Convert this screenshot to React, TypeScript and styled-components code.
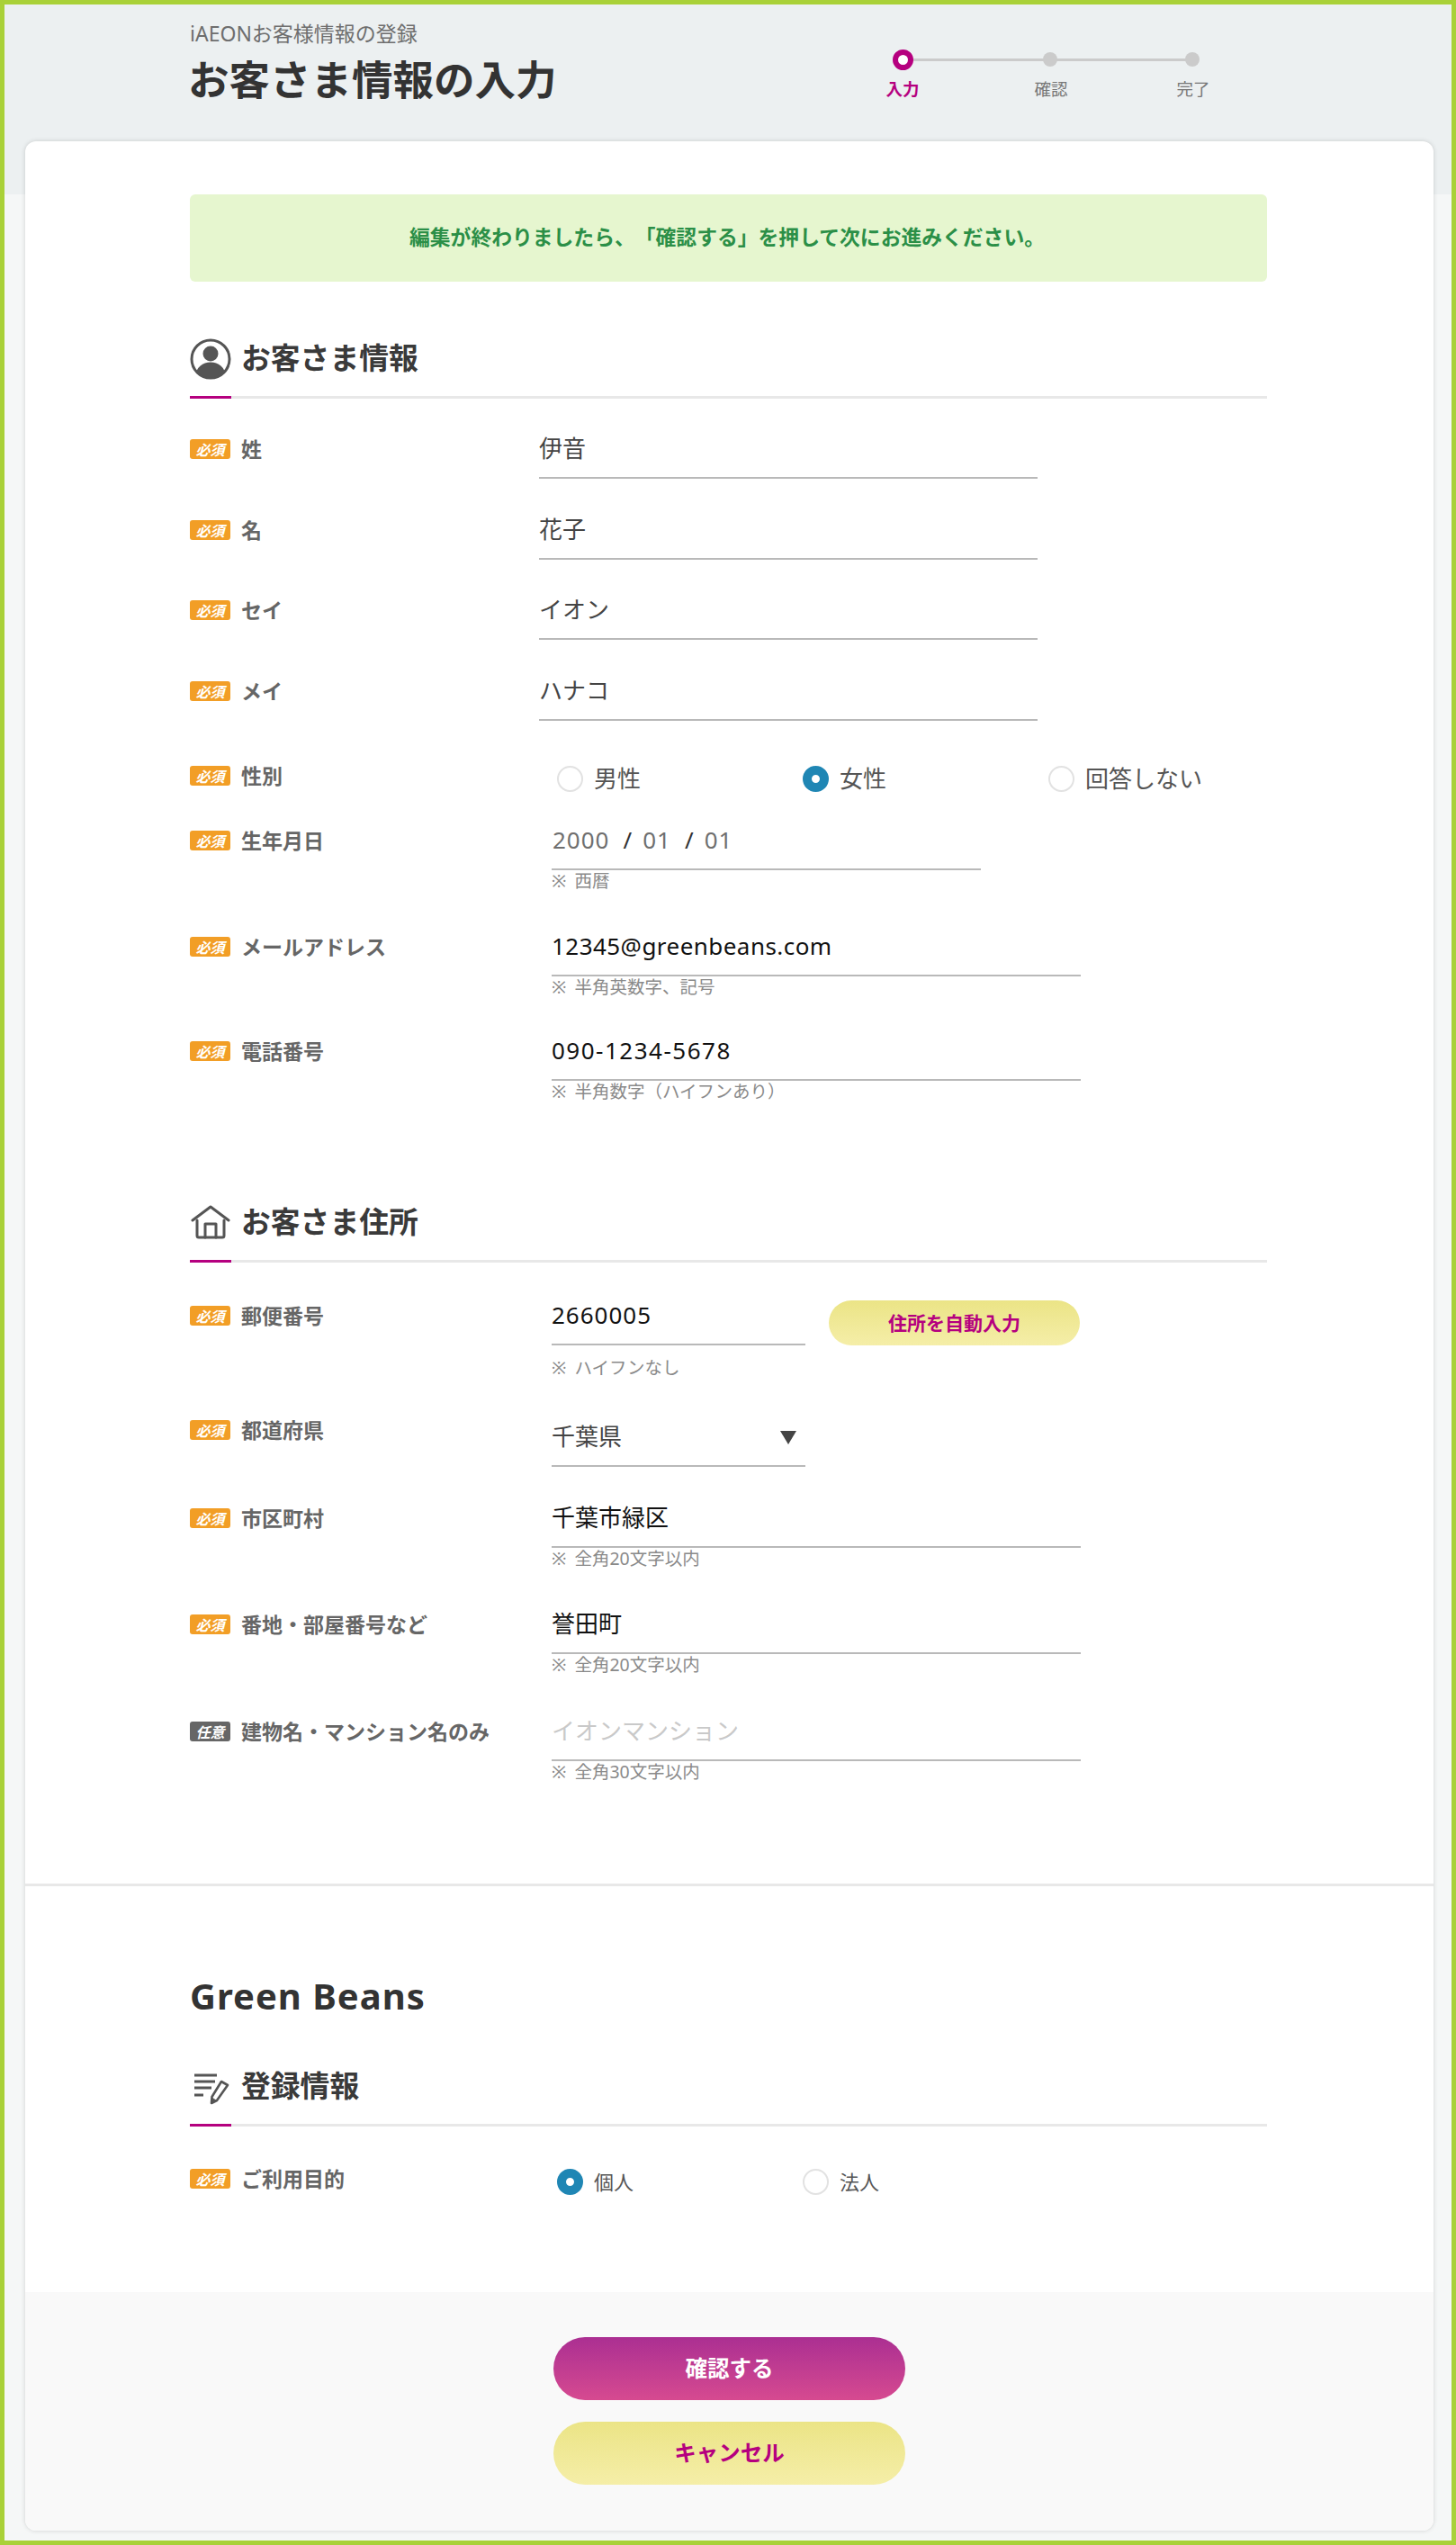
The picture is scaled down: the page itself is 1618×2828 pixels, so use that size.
import React from "react";
import styled, { createGlobalStyle } from "styled-components";

const Global = createGlobalStyle`
  html, body { margin: 0; padding: 0; }
  body {
    font-family: "Noto Sans", "Noto Sans CJK JP", sans-serif;
    color: #333;
    text-spacing-trim: space-all;
  }
  * { box-sizing: border-box; }
`;

const Page = styled.div`
  min-height: 2828px;
  border: 5px solid #a9d138;
  background: linear-gradient(to bottom, #ecf0f1 0, #ecf0f1 211px, #f5f7f7 211px);
  padding-bottom: 11px;
`;
const Header = styled.header`
  display: flex;
  height: 152px;
  padding-left: 205px;
`;
const TitleBlock = styled.div`
  flex: 0 0 763px;
  padding-top: 18px;
`;
const SubTitle = styled.div`
  font-size: 23px;
  line-height: 28px;
  color: #6e6e6e;
  padding-left: 1px;
`;
const Title = styled.h1`
  margin: 7px 0 0 -1px;
  font-size: 45.5px;
  line-height: 60px;
  font-weight: 700;
  color: #333;
`;
const Stepper = styled.div`
  display: flex;
  align-items: flex-start;
  margin-top: 49px;
`;
const Step = styled.div`
  width: 60px;
  display: flex;
  flex-direction: column;
  align-items: center;
  position: relative;
  z-index: 1;
`;
const DotSlot = styled.div`
  height: 24px;
  display: flex;
  align-items: center;
`;
const Dot = styled.span<{ $active?: boolean }>`
  display: block;
  width: ${(p) => (p.$active ? 23 : 16)}px;
  height: ${(p) => (p.$active ? 23 : 16)}px;
  border-radius: 50%;
  background: ${(p) => (p.$active ? "#fff" : "#cbcbcb")};
  border: ${(p) => (p.$active ? "6px solid #b5007f" : "none")};
`;
const StepLabel = styled.div<{ $active?: boolean }>`
  margin-top: 10px;
  font-size: 18.5px;
  line-height: 22px;
  font-weight: ${(p) => (p.$active ? 700 : 400)};
  color: ${(p) => (p.$active ? "#b5007f" : "#777")};
  padding-left: ${(p) => (p.$active ? 0 : 2)}px;
`;
const Connector = styled.div<{ $w: number }>`
  width: ${(p) => p.$w}px;
  height: 3px;
  margin: 11px -30px 0;
  background: #cbcbcb;
`;
const Card = styled.main`
  margin: 0 20px 0 23px;
  background: #fff;
  border-radius: 12px;
  overflow: hidden;
  box-shadow: 0 0 5px rgba(0, 0, 0, 0.16);
`;
const Inner = styled.section<{ $h: number }>`
  display: flow-root;
  height: ${(p) => p.$h}px;
  padding: 0 185px 0 183px;
`;
const Banner = styled.div`
  margin-top: 59px;
  height: 97px;
  display: flex;
  align-items: center;
  justify-content: center;
  background: #e6f6cf;
  border-radius: 6px;
  padding-bottom: 4px;
  padding-right: 3px;
  font-size: 22.8px;
  font-weight: 700;
  color: #2b8f47;
`;
const SectionHead = styled.div<{ $top: number }>`
  position: relative;
  margin-top: ${(p) => p.$top}px;
  display: flex;
  align-items: center;
  height: 66px;
  padding-bottom: 21px;
  border-bottom: 3px solid #e8e8e8;
  &::after {
    content: "";
    position: absolute;
    left: 0;
    bottom: -3px;
    width: 46px;
    height: 3px;
    background: #b5007f;
  }
`;
const HeadIcon = styled.span`
  width: 46px;
  height: 46px;
  display: flex;
  align-items: center;
  justify-content: center;
  margin: 2px 11px 0 0;
`;
const HeadText = styled.h2`
  margin: -1px 0 0;
  font-size: 32.8px;
  line-height: 46px;
  font-weight: 700;
  color: #3a3a3a;
`;
const Row = styled.div<{ $top: number }>`
  display: grid;
  grid-template-columns: 388px 1fr;
  margin-top: ${(p) => p.$top}px;
`;
const LabelCell = styled.div`
  display: flex;
  align-items: center;
  height: 50px;
`;
const Badge = styled.span<{ $optional?: boolean }>`
  flex: none;
  width: 45px;
  height: 22px;
  display: flex;
  align-items: center;
  justify-content: center;
  border-radius: 3px;
  background: ${(p) => (p.$optional ? "#666" : "#f29e26")};
  color: #fff;
  font-size: 16px;
  font-weight: 700;
  font-style: italic;
`;
const LabelText = styled.span`
  margin-left: 12px;
  margin-top: -3px;
  font-size: 23px;
  font-weight: 700;
  color: #666;
`;
const Field = styled.div<{ $w: number; $indent?: number }>`
  width: ${(p) => p.$w}px;
  margin-left: ${(p) => p.$indent ?? 0}px;
`;
const Value = styled.div<{ $tone?: "ink" | "soft" | "hint"; $h?: number; $spacing?: number }>`
  height: ${(p) => p.$h ?? 58}px;
  padding-bottom: 14px;
  display: flex;
  align-items: flex-end;
  border-bottom: 2px solid #b9b9b9;
  font-size: 26px;
  line-height: 36px;
  letter-spacing: ${(p) => p.$spacing ?? 0}px;
  color: ${(p) => (p.$tone === "hint" ? "#c9c9c9" : p.$tone === "soft" ? "#444" : "#111")};
`;
const DatePart = styled.span`
  color: #6f6f6f;
  padding-left: 1px;
  letter-spacing: 1px;
`;
const Slash = styled.span`
  color: #333;
  margin: 0 11px 0 15px;
`;
const Note = styled.div<{ $top?: number }>`
  margin-top: ${(p) => p.$top ?? 1}px;
  font-size: 19.5px;
  line-height: 22px;
  word-spacing: 4px;
  color: #8a8a8a;
`;
const Radios = styled.div<{ $w: number }>`
  display: flex;
  padding: 14px 0 0 20px;
  > * {
    width: ${(p) => p.$w}px;
  }
`;
const RadioItem = styled.label`
  display: flex;
  align-items: center;
  height: 29px;
`;
const RadioMark = styled.span<{ $on?: boolean }>`
  width: 29px;
  height: 29px;
  flex: none;
  border-radius: 50%;
  background: #fff;
  border: ${(p) => (p.$on ? "10px solid #1f86b4" : "2px solid #e2e2e2")};
`;
const RadioText = styled.span<{ $size: number }>`
  margin-left: 12px;
  font-size: ${(p) => p.$size}px;
  color: #555;
  margin-top: -4px;
`;
const ZipRow = styled.div`
  display: flex;
  align-items: flex-end;
  gap: 26px;
`;
const AutoButton = styled.button`
  width: 279px;
  height: 50px;
  padding: 0 0 2px;
  border: none;
  border-radius: 25px;
  background: linear-gradient(to bottom, #ebe486, #f5eea8);
  color: #b5007f;
  font-family: inherit;
  font-size: 21px;
  font-weight: 700;
`;
const SelectArrow = styled.span`
  margin-left: auto;
  margin-right: 10px;
  margin-bottom: 9px;
  width: 0;
  height: 0;
  border-left: 9px solid transparent;
  border-right: 9px solid transparent;
  border-top: 15px solid #444;
`;
const Divider = styled.hr`
  margin: 0;
  border: none;
  height: 3px;
  background: #e8e8e8;
`;
const Brand = styled.h2`
  margin: 0;
  padding-top: 97px;
  font-size: 40px;
  line-height: 50px;
  letter-spacing: 1px;
  font-weight: 700;
  color: #333;
`;
const Footer = styled.footer`
  height: 265px;
  padding-top: 50px;
  display: flex;
  flex-direction: column;
  align-items: center;
  gap: 24px;
  background: #f9f9f9;
`;
const PillButton = styled.button<{ $primary?: boolean }>`
  width: 391px;
  height: 70px;
  padding: 0 0 4px;
  border: none;
  border-radius: 35px;
  background: ${(p) =>
    p.$primary
      ? "linear-gradient(to bottom, #ab2f92, #d64a90)"
      : "linear-gradient(to bottom, #ebe486, #f5eea8)"};
  color: ${(p) => (p.$primary ? "#fff" : "#b5007f")};
  font-family: inherit;
  font-size: 24.5px;
  font-weight: 700;
`;

const UserIcon = () => (
  <svg width="46" height="46" viewBox="0 0 46 46">
    <defs>
      <clipPath id="userClip">
        <circle cx="23" cy="23" r="20.5" />
      </clipPath>
    </defs>
    <circle cx="23" cy="23" r="21" fill="none" stroke="#555" strokeWidth="3" />
    <circle cx="23" cy="17" r="8.5" fill="#555" />
    <ellipse cx="23" cy="40" rx="16" ry="13.5" fill="#555" clipPath="url(#userClip)" />
  </svg>
);
const HomeIcon = () => (
  <svg width="46" height="46" viewBox="0 0 46 46" fill="none" stroke="#555" strokeWidth="3" strokeLinejoin="round" strokeLinecap="round">
    <path d="M3 20 L23 5 L43 20" />
    <path d="M8 20 V37 a2 2 0 0 0 2 2 H36 a2 2 0 0 0 2 -2 V20" />
    <path d="M17 39 V24 H29 V39" />
  </svg>
);
const EditIcon = () => (
  <svg width="46" height="46" viewBox="0 0 46 46" fill="none" stroke="#555" strokeWidth="3">
    <path d="M5 10 H30 M5 17 H28 M5 24 H24 M5 32 H15" />
    <path d="M35 17 L42 21 L30 38 L24 41 L24.5 34 Z" strokeWidth="2.6" strokeLinejoin="round" />
    <path d="M24 41 L24.5 35 L29 38 Z" fill="#555" strokeWidth="1" />
  </svg>
);

const Lab = ({ text, optional }: { text: string; optional?: boolean }) => (
  <LabelCell>
    <Badge $optional={optional}>{optional ? "任意" : "必須"}</Badge>
    <LabelText>{text}</LabelText>
  </LabelCell>
);

const Head = ({ top, icon, text }: { top: number; icon: React.ReactNode; text: string }) => (
  <SectionHead $top={top}>
    <HeadIcon>{icon}</HeadIcon>
    <HeadText>{text}</HeadText>
  </SectionHead>
);

const Radio = ({ text, on, size }: { text: string; on?: boolean; size: number }) => (
  <RadioItem>
    <RadioMark $on={on} />
    <RadioText $size={size}>{text}</RadioText>
  </RadioItem>
);

const nameRows = [
  { label: "姓", value: "伊音", top: 31 },
  { label: "名", value: "花子", top: 32 },
  { label: "セイ", value: "イオン", top: 31 },
  { label: "メイ", value: "ハナコ", top: 32 },
];

export default function App() {
  return (
    <Page>
      <Global />
      <Header>
        <TitleBlock>
          <SubTitle>iAEONお客様情報の登録</SubTitle>
          <Title>お客さま情報の入力</Title>
        </TitleBlock>
        <Stepper>
          <Step>
            <DotSlot><Dot $active /></DotSlot>
            <StepLabel $active>入力</StepLabel>
          </Step>
          <Connector $w={164} />
          <Step>
            <DotSlot><Dot /></DotSlot>
            <StepLabel>確認</StepLabel>
          </Step>
          <Connector $w={158} />
          <Step>
            <DotSlot><Dot /></DotSlot>
            <StepLabel>完了</StepLabel>
          </Step>
        </Stepper>
      </Header>
      <Card>
        <Inner $h={1936}>
          <Banner>編集が終わりましたら、「確認する」を押して次にお進みください。</Banner>
          <Head top={64} icon={<UserIcon />} text="お客さま情報" />
          {nameRows.map((r) => (
            <Row key={r.label} $top={r.top}>
              <Lab text={r.label} />
              <Field $w={554}>
                <Value $tone="soft">{r.value}</Value>
              </Field>
            </Row>
          ))}
          <Row $top={36}>
            <Lab text="性別" />
            <Radios $w={273}>
              <Radio text="男性" size={26} />
              <Radio text="女性" on size={26} />
              <Radio text="回答しない" size={26} />
            </Radios>
          </Row>
          <Row $top={22}>
            <Lab text="生年月日" />
            <Field $w={477} $indent={14}>
              <Value>
                <DatePart>2000</DatePart>
                <Slash>/</Slash>
                <DatePart>01</DatePart>
                <Slash>/</Slash>
                <DatePart>01</DatePart>
              </Value>
              <Note>※ 西暦</Note>
            </Field>
          </Row>
          <Row $top={37}>
            <Lab text="メールアドレス" />
            <Field $w={588} $indent={14}>
              <Value $spacing={0.45}>12345@greenbeans.com</Value>
              <Note>※ 半角英数字、記号</Note>
            </Field>
          </Row>
          <Row $top={35}>
            <Lab text="電話番号" />
            <Field $w={588} $indent={14}>
              <Value $spacing={1.5}>090-1234-5678</Value>
              <Note>※ 半角数字（ハイフンあり）</Note>
            </Field>
          </Row>
          <Head top={113} icon={<HomeIcon />} text="お客さま住所" />
          <Row $top={34}>
            <Lab text="郵便番号" />
            <Field $w={588} $indent={14}>
              <ZipRow>
                <Field $w={282}>
                  <Value $spacing={1}>2660005</Value>
                </Field>
                <AutoButton>住所を自動入力</AutoButton>
              </ZipRow>
              <Note $top={14}>※ ハイフンなし</Note>
            </Field>
          </Row>
          <Row $top={33}>
            <Lab text="都道府県" />
            <Field $w={282} $indent={14}>
              <Value $h={66} $tone="soft">
                千葉県
                <SelectArrow />
              </Value>
            </Field>
          </Row>
          <Row $top={32}>
            <Lab text="市区町村" />
            <Field $w={588} $indent={14}>
              <Value>千葉市緑区</Value>
              <Note>※ 全角20文字以内</Note>
            </Field>
          </Row>
          <Row $top={37}>
            <Lab text="番地・部屋番号など" />
            <Field $w={588} $indent={14}>
              <Value>誉田町</Value>
              <Note>※ 全角20文字以内</Note>
            </Field>
          </Row>
          <Row $top={38}>
            <Lab text="建物名・マンション名のみ" optional />
            <Field $w={588} $indent={14}>
              <Value $tone="hint">イオンマンション</Value>
              <Note>※ 全角30文字以内</Note>
            </Field>
          </Row>
        </Inner>
        <Divider />
        <Inner $h={451}>
          <Brand>Green Beans</Brand>
          <Head top={54} icon={<EditIcon />} text="登録情報" />
          <Row $top={33}>
            <Lab text="ご利用目的" />
            <Radios $w={273}>
              <Radio text="個人" on size={22} />
              <Radio text="法人" size={22} />
            </Radios>
          </Row>
        </Inner>
        <Footer>
          <PillButton $primary>確認する</PillButton>
          <PillButton>キャンセル</PillButton>
        </Footer>
      </Card>
    </Page>
  );
}
